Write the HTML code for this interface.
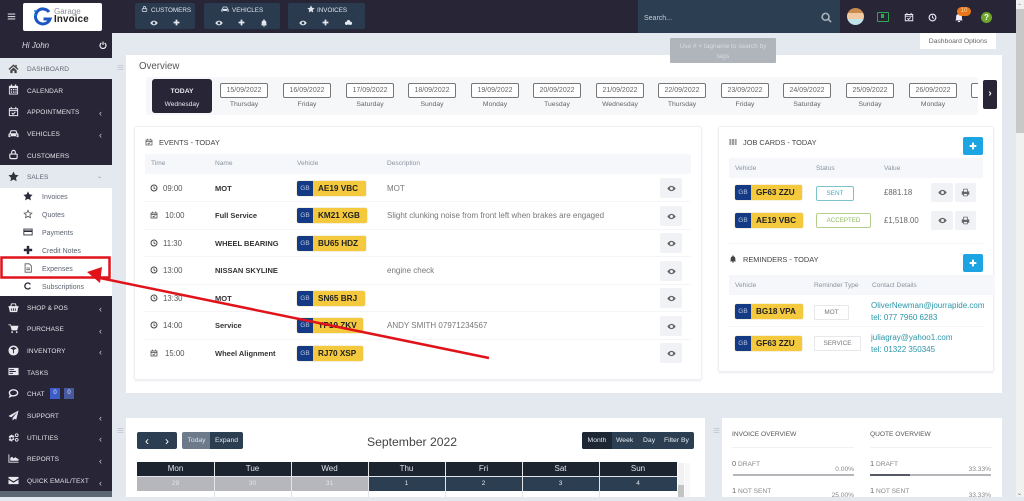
<!DOCTYPE html>
<html><head><meta charset="utf-8"><title>Garage Invoice Dashboard</title>
<style>
html,body{margin:0;padding:0}
body{width:1024px;height:497px;overflow:hidden;position:relative;background:#e4e9f0;font-family:"Liberation Sans",sans-serif;color:#444;filter:blur(.25px)}
.b,.t,svg.i{position:absolute}
.t{white-space:nowrap;line-height:10px;height:10px;transform:translateY(1px)}
svg.i{fill:currentColor}
.nav{font-size:6.500px;color:#e4e4ea;left:27px;letter-spacing:.1px;transform:translateY(2px)}
.sub{font-size:7px;color:#5d6470;left:42px;transform:translateY(2px)}
.ni{color:#e8e8ee;left:8px;width:11px;height:11px}
.si{color:#2b2a3a;left:23px;width:10px;height:10px}
.ar{font-size:9px;color:#c9c9d2;left:99px;transform:translateY(2px)}
.dt{position:absolute;top:83px;width:46px;height:13px;border:1px solid #777;border-radius:2px;font-size:7px;line-height:13px;text-align:center;color:#666;background:#fff}
.dy{position:absolute;top:100px;width:48px;line-height:10px;font-size:6.800px;text-align:center;color:#666}
.th{font-size:6.600px;color:#8a94a0}
.tm{font-size:7.800px;color:#555}
.nm{font-size:7.500px;font-weight:bold;color:#333;left:215px}
.ds{font-size:8px;color:#777;left:387px}
.p{position:absolute;height:15px;border-radius:2px;background:#f4c93d;overflow:hidden;border:0;box-shadow:0 0 1px #b89a30}
.p i{position:absolute;left:0;top:0;width:16px;height:15px;background:#143a86;color:#b9c6df;font:normal 6.500px/15px "Liberation Sans",sans-serif;text-align:center}
.p b{position:absolute;left:21px;top:0;font-size:8.200px;line-height:15px;color:#222;white-space:nowrap}
.eb{position:absolute;background:#f0f2f5;border-radius:2px;color:#666}
.eb svg{position:absolute;left:50%;top:50%;width:9px;height:9px;margin:-4.500px 0 0 -4.500px;fill:currentColor}
.cal{font-size:7.600px;color:#dfe5ec;text-align:center;position:absolute;line-height:14px}
.ct{font-size:8px;color:#2a96a8}
.ov{font-size:6.600px;color:#666}
</style></head><body>
<svg width="0" height="0" style="position:absolute"><defs>
<symbol id="eye" viewBox="0 0 24 24"><path d="M12 5C7 5 3 8.500 1 12c2 3.500 6 7 11 7s9-3.500 11-7c-2-3.500-6-7-11-7zm0 11a4 4 0 1 1 0-8 4 4 0 0 1 0 8z"/></symbol>
<symbol id="plus" viewBox="0 0 24 24"><path d="M9 2h6v7h7v6h-7v7H9v-7H2V9h7z"/></symbol>
<symbol id="bell" viewBox="0 0 24 24"><path d="M12 1a2 2 0 0 0-2 2v1a7 7 0 0 0-5 7v5l-2 3h18l-2-3v-5a7 7 0 0 0-5-7V3a2 2 0 0 0-2-2zM9 20a3 3 0 0 0 6 0z"/></symbol>
<symbol id="star" viewBox="0 0 24 24"><path d="M12 1l3.400 7.200 7.600 1-5.600 5.400 1.400 7.800L12 18.600 5.200 22.400l1.400-7.800L1 9.200l7.600-1z"/></symbol>
<symbol id="staro" viewBox="0 0 24 24"><path fill="none" stroke="currentColor" stroke-width="2" d="M12 3l2.800 6 6.400.9-4.700 4.400 1.200 6.500L12 17.600l-5.700 3.200 1.200-6.500L2.800 9.900l6.400-.9z"/></symbol>
<symbol id="clock" viewBox="0 0 24 24"><circle cx="12" cy="12" r="9" fill="none" stroke="currentColor" stroke-width="3"/><path fill="none" stroke="currentColor" stroke-width="2.500" d="M12 7v5.500l4 2"/></symbol>
<symbol id="cal" viewBox="0 0 24 24"><path fill="none" stroke="currentColor" stroke-width="2.200" d="M3 6h18v15H3zM3 10h18M7 2v5M17 2v5M8 15l3 3 5-5"/></symbol>
<symbol id="calf" viewBox="0 0 24 24"><path d="M6 1h3v3h6V1h3v3h4v19H2V4h4zM4 9v12h16V9z"/><path d="M6 11h3v3H6zM11 11h3v3h-3zM16 11h3v3h-3zM6 16h3v3H6zM11 16h3v3h-3zM16 16h3v3h-3z"/></symbol>
<symbol id="home" viewBox="0 0 24 24"><path d="M12 3L1 13l2 2 9-8 9 8 2-2-4-3.600V4h-3v2.800zM5 16v6h5v-5h4v5h5v-6l-7-6.300z"/></symbol>
<symbol id="car" viewBox="0 0 24 24"><path d="M6 5h12l3 7 2 1v7h-4v-2H5v2H1v-7l2-1zm1.500 2L6 11.500h12L16.500 7zM5 14a1.500 1.500 0 1 0 0 3 1.500 1.500 0 0 0 0-3zm14 0a1.500 1.500 0 1 0 0 3 1.500 1.500 0 0 0 0-3z"/></symbol>
<symbol id="user" viewBox="0 0 24 24"><path fill="none" stroke="currentColor" stroke-width="2.500" d="M8 11V7a4 4 0 0 1 8 0v4M5 11h14a1 1 0 0 1 1 1v6a3 3 0 0 1-3 3H7a3 3 0 0 1-3-3v-6a1 1 0 0 1 1-1z"/></symbol>
<symbol id="shop" viewBox="0 0 24 24"><path d="M7 3h10l2 6h4v3h-1l-2 10H4L2 12H1V9h4zm1.500 2L7.500 9h9l-1-4zM7 14v5h2v-5zm4 0v5h2v-5zm4 0v5h2v-5z"/></symbol>
<symbol id="cart" viewBox="0 0 24 24"><path d="M1 3h5l1 3h16l-3 10H8L5 5H1zM9 18a2 2 0 1 1 0 4 2 2 0 0 1 0-4zm10 0a2 2 0 1 1 0 4 2 2 0 0 1 0-4z"/></symbol>
<symbol id="cube" viewBox="0 0 24 24"><path d="M12 1a11 11 0 1 1 0 22 11 11 0 0 1 0-22zM5 7l6 3.500V18l2 0v-7.500L19 7l-7-3z"/></symbol>
<symbol id="tasks" viewBox="0 0 24 24"><path d="M1 4h22v16H1zm2 3v2h10V7zm0 4v2h14v-2zm0 4v2h8v-2z"/></symbol>
<symbol id="chat" viewBox="0 0 24 24"><path fill="none" stroke="currentColor" stroke-width="3" d="M12 4c5 0 9 2.600 9 6.500S17 17 12 17c-1 0-2 0-3-.3L4 19l1.500-4C4 13.800 3 12.300 3 10.500 3 6.600 7 4 12 4z"/></symbol>
<symbol id="send" viewBox="0 0 24 24"><path d="M23 1L1 13l6 3L20 5 10 17.500V23l4-4 4 2z"/></symbol>
<symbol id="cogs" viewBox="0 0 24 24"><path fill-rule="evenodd" d="M9 6l1.500 2 2.500-.5 1 2.500-2 1.500v2l2 1.500-1 2.500-2.500-.5L9 20.500H6.500L5 18.500l-2.500.5-1-2.500 2-1.500v-2l-2-1.500 1-2.500L5 8l1.500-2zM8 11a2.500 2.500 0 1 0 0 5 2.500 2.500 0 0 0 0-5z"/><circle cx="19" cy="7" r="3" fill="none" stroke="currentColor" stroke-width="2"/><circle cx="19" cy="17" r="3" fill="none" stroke="currentColor" stroke-width="2"/></symbol>
<symbol id="chart" viewBox="0 0 24 24"><path d="M1 3h2v16h20v2H1zM5 17v-6l4-3 3 4 4-3 4 3 3 1v4z"/></symbol>
<symbol id="mail" viewBox="0 0 24 24"><path d="M1 4h22v3l-11 7L1 7zM1 10l11 7 11-7v10H1z"/></symbol>
<symbol id="card" viewBox="0 0 24 24"><path d="M1 4h22v16H1zm2 2v2h18V6zm0 6v6h18v-6z"/></symbol>
<symbol id="doc" viewBox="0 0 24 24"><path fill="none" stroke="currentColor" stroke-width="2" d="M5 2h10l5 5v15H5zM8 12h9M8 16h9"/></symbol>
<symbol id="redo" viewBox="0 0 24 24"><path fill="none" stroke="currentColor" stroke-width="4" d="M19 7A9 9 0 1 0 19 17"/></symbol>
<symbol id="print" viewBox="0 0 24 24"><path d="M6 2h12v7h4v9h-4v4H6v-4H2V9h4zm2 2v6h8V4zm0 12v4h8v-4z"/></symbol>
<symbol id="rows" viewBox="0 0 24 24"><path d="M1 4h6v4H1zM9 4h6v4H9zM17 4h6v4h-6zM1 10h6v4H1zM9 10h6v4H9zM17 10h6v4h-6zM1 16h6v4H1zM9 16h6v4H9zM17 16h6v4h-6z"/></symbol>
<symbol id="search" viewBox="0 0 24 24"><path fill="none" stroke="currentColor" stroke-width="3.500" d="M10 3a7.500 7.500 0 1 1 0 15 7.500 7.500 0 0 1 0-15zM15.500 15.500L22 22"/></symbol>
<symbol id="power" viewBox="0 0 24 24"><path fill="none" stroke="currentColor" stroke-width="3.500" d="M7 6a9 9 0 1 0 10 0M12 2v10"/></symbol>
<symbol id="cars" viewBox="0 0 24 24"><path d="M12 3a5 5 0 0 1 5 5 5 5 0 1 1-2 9H9a5 5 0 1 1-2-9 5 5 0 0 1 5-5z"/></symbol>
<symbol id="ham" viewBox="0 0 24 24"><path d="M2 4h20v3H2zM2 10.500h20v3H2zM2 17h20v3H2z"/></symbol>
</defs></svg>

<!-- top bar -->
<div class="b" style="left:0;top:0;width:1016px;height:33px;background:#272536"></div>
<svg class="i" style="left:7px;top:12px;width:9px;height:9px;color:#cfd3da"><use href="#ham"/></svg>
<div class="b" style="left:23px;top:3px;width:79px;height:28px;background:#fff;border-radius:2px"></div>
<svg class="b" style="left:34px;top:7px;width:18px;height:20px" viewBox="0 0 18 20"><path d="M15 5A7.500 7.500 0 1 0 16 12H9.500" fill="none" stroke="#1c55c4" stroke-width="3"/><circle cx="1" cy="4" r="1" fill="#1c9ad6"/><circle cx="0.800" cy="8" r="1" fill="#1c9ad6"/></svg>
<div class="t" style="left:54px;top:6px;font-size:8px;color:#8a8f98">Garage</div>
<div class="t" style="left:54px;top:14px;font-size:9.700px;font-weight:bold;color:#222;letter-spacing:.2px">Invoice</div>

<div class="b" style="left:135px;top:3px;width:60px;height:26px;background:#2a3a4f;border-radius:2px"></div>
<div class="b" style="left:204px;top:3px;width:76px;height:26px;background:#2a3a4f;border-radius:2px"></div>
<div class="b" style="left:288px;top:3px;width:77px;height:26px;background:#2a3a4f;border-radius:2px"></div>
<svg class="i" style="left:141px;top:5px;width:7px;height:8px;color:#dfe3ea"><use href="#user"/></svg>
<div class="t" style="left:151px;top:5px;font-size:6.300px;color:#dfe3ea">CUSTOMERS</div>
<svg class="i" style="left:221px;top:5px;width:8px;height:8px;color:#dfe3ea"><use href="#car"/></svg>
<div class="t" style="left:232px;top:5px;font-size:6.300px;color:#dfe3ea">VEHICLES</div>
<svg class="i" style="left:307px;top:5px;width:8px;height:8px;color:#dfe3ea"><use href="#star"/></svg>
<div class="t" style="left:317px;top:5px;font-size:6.300px;color:#dfe3ea">INVOICES</div>
<svg class="i" style="left:150px;top:19px;width:8px;height:8px;color:#e4e8ee"><use href="#eye"/></svg>
<svg class="i" style="left:173px;top:19px;width:7px;height:7px;color:#e4e8ee"><use href="#plus"/></svg>
<svg class="i" style="left:215px;top:19px;width:8px;height:8px;color:#e4e8ee"><use href="#eye"/></svg>
<svg class="i" style="left:238px;top:19px;width:7px;height:7px;color:#e4e8ee"><use href="#plus"/></svg>
<svg class="i" style="left:260px;top:19px;width:8px;height:8px;color:#e4e8ee"><use href="#bell"/></svg>
<svg class="i" style="left:299px;top:19px;width:8px;height:8px;color:#e4e8ee"><use href="#eye"/></svg>
<svg class="i" style="left:322px;top:19px;width:7px;height:7px;color:#e4e8ee"><use href="#plus"/></svg>
<svg class="i" style="left:344px;top:19px;width:9px;height:8px;color:#e4e8ee"><use href="#cars"/></svg>

<div class="b" style="left:638px;top:0;width:202px;height:33px;background:#2c3e52"></div>
<div class="t" style="left:644px;top:13px;font-size:7px;color:#c3ccd6">Search...</div>
<svg class="i" style="left:821px;top:12px;width:11px;height:11px;color:#a9b3bd"><use href="#search"/></svg>
<div class="b" style="left:847px;top:8px;width:17px;height:17px;border-radius:50%;background:linear-gradient(#c98a50 0 30%,#f2c9a0 30% 65%,#bfe3e8 65%)"></div>
<div class="b" style="left:877px;top:12px;width:12px;height:10px;border:1.500px solid #2fa84f;box-sizing:border-box;border-radius:1px"></div>
<div class="b" style="left:881px;top:14px;width:3px;height:4px;background:#2fa84f"></div>
<svg class="i" style="left:904px;top:12px;width:10px;height:10px;color:#eef"><use href="#cal"/></svg>
<svg class="i" style="left:928px;top:13px;width:9px;height:9px;color:#eef"><use href="#clock"/></svg>
<svg class="i" style="left:954px;top:12px;width:10px;height:11px;color:#eef"><use href="#bell"/></svg>
<div class="b" style="left:957px;top:7px;width:14px;height:9px;border-radius:5px;background:#e8771a;color:#f6d9a0;font-size:6px;line-height:9px;text-align:center">10</div>
<div class="b" style="left:981px;top:12px;width:11px;height:11px;border-radius:50%;background:#6fa52a;color:#fff;font-size:8px;font-weight:bold;line-height:11px;text-align:center">?</div>

<!-- sidebar -->
<div class="b" style="left:0;top:33px;width:112px;height:464px;background:#272536"></div>
<div class="t" style="left:22px;top:40px;font-size:8px;font-style:italic;color:#dcdce4">Hi John</div>
<svg class="i" style="left:99px;top:41px;width:8px;height:8px;color:#f0f0f4"><use href="#power"/></svg>
<div class="b" style="left:0;top:58px;width:112px;height:21px;background:#e4e9f0"></div>
<div class="b" style="left:0;top:165px;width:112px;height:23px;background:#e4e9f0"></div>
<div class="b" style="left:0;top:188px;width:112px;height:108px;background:#fff"></div>
<div class="b" style="left:0;top:491px;width:112px;height:6px;background:#5b6873"></div>

<svg class="i ni" style="top:63px;color:#444"><use href="#home"/></svg><div class="t nav" style="top:63px;color:#5d6470">DASHBOARD</div>
<svg class="i ni" style="top:84px"><use href="#calf"/></svg><div class="t nav" style="top:85px">CALENDAR</div><svg class="i ni" style="top:106px"><use href="#cal"/></svg>
<div class="t nav" style="top:106px">APPOINTMENTS</div><div class="t ar" style="top:106px">‹</div>
<svg class="i ni" style="top:128px"><use href="#car"/></svg><div class="t nav" style="top:128px">VEHICLES</div><div class="t ar" style="top:128px">‹</div>
<svg class="i ni" style="top:149px"><use href="#user"/></svg><div class="t nav" style="top:150px">CUSTOMERS</div>
<svg class="i ni" style="top:171px;color:#33323f"><use href="#star"/></svg><div class="t nav" style="top:171px;color:#5d6470">SALES</div><div class="t" style="left:97px;top:171px;font-size:6px;color:#8b929c">⌄</div>

<svg class="i si" style="top:191px"><use href="#star"/></svg><div class="t sub" style="top:191px">Invoices</div>
<svg class="i si" style="top:209px;color:#555"><use href="#staro"/></svg><div class="t sub" style="top:209px">Quotes</div>
<svg class="i si" style="top:227px"><use href="#card"/></svg><div class="t sub" style="top:227px">Payments</div>
<svg class="i si" style="top:245px"><use href="#plus"/></svg><div class="t sub" style="top:245px">Credit Notes</div>
<svg class="i si" style="top:263px;color:#555"><use href="#doc"/></svg><div class="t sub" style="top:263px">Expenses</div>
<svg class="i si" style="top:281px;left:24px;width:8px"><use href="#redo"/></svg><div class="t sub" style="top:281px">Subscriptions</div>

<svg class="i ni" style="top:302px"><use href="#shop"/></svg><div class="t nav" style="top:302px">SHOP &amp; POS</div><div class="t ar" style="top:302px">‹</div>
<svg class="i ni" style="top:323px"><use href="#cart"/></svg><div class="t nav" style="top:323px">PURCHASE</div><div class="t ar" style="top:324px">‹</div>
<svg class="i ni" style="top:345px"><use href="#cube"/></svg><div class="t nav" style="top:345px">INVENTORY</div><div class="t ar" style="top:345px">‹</div>
<svg class="i ni" style="top:366px"><use href="#tasks"/></svg><div class="t nav" style="top:367px">TASKS</div>
<svg class="i ni" style="top:388px"><use href="#chat"/></svg><div class="t nav" style="top:388px">CHAT</div>
<div class="b" style="left:50px;top:388px;width:10px;height:11px;background:#3c5cc8;color:#dfe6ff;font-size:6px;line-height:11px;text-align:center">0</div>
<div class="b" style="left:64px;top:388px;width:10px;height:11px;background:#475aa0;color:#dfe6ff;font-size:6px;line-height:11px;text-align:center">0</div>
<svg class="i ni" style="top:410px"><use href="#send"/></svg><div class="t nav" style="top:410px">SUPPORT</div><div class="t ar" style="top:411px">‹</div>
<svg class="i ni" style="top:432px"><use href="#cogs"/></svg><div class="t nav" style="top:432px">UTILITIES</div><div class="t ar" style="top:432px">‹</div>
<svg class="i ni" style="top:453px"><use href="#chart"/></svg><div class="t nav" style="top:453px">REPORTS</div><div class="t ar" style="top:454px">‹</div>
<svg class="i ni" style="top:475px"><use href="#mail"/></svg><div class="t nav" style="top:475px">QUICK EMAIL/TEXT</div><div class="t ar" style="top:476px">‹</div>

<!-- grips -->
<svg class="i" style="left:117px;top:64px;width:7px;height:7px;color:#c3c8d0"><use href="#ham"/></svg>
<svg class="i" style="left:117px;top:427px;width:7px;height:7px;color:#c3c8d0"><use href="#ham"/></svg>
<svg class="i" style="left:713px;top:427px;width:7px;height:7px;color:#c3c8d0"><use href="#ham"/></svg>

<!-- overview panel -->
<div class="b" style="left:126px;top:55px;width:876px;height:338px;background:#fff"></div>
<div class="t" style="left:139px;top:61px;font-size:9.700px;color:#555">Overview</div>
<div class="b" style="left:146px;top:77px;width:832px;height:38px;background:#f6f7f9;border-radius:3px;overflow:hidden"></div>
<div class="b" style="left:152px;top:79px;width:60px;height:34px;background:#272536;border-radius:3px"></div>
<div class="t" style="left:152px;width:60px;text-align:center;top:86px;font-size:6.800px;font-weight:bold;color:#e8e8ee">TODAY</div>
<div class="t" style="left:152px;width:60px;text-align:center;top:99px;font-size:6.600px;color:#e8e8ee">Wednesday</div>

<div class="dt" style="left:220px">15/09/2022</div><div class="dy" style="left:220px">Thursday</div>
<div class="dt" style="left:283px">16/09/2022</div><div class="dy" style="left:283px">Friday</div>
<div class="dt" style="left:346px">17/09/2022</div><div class="dy" style="left:346px">Saturday</div>
<div class="dt" style="left:408px">18/09/2022</div><div class="dy" style="left:408px">Sunday</div>
<div class="dt" style="left:471px">19/09/2022</div><div class="dy" style="left:471px">Monday</div>
<div class="dt" style="left:533px">20/09/2022</div><div class="dy" style="left:533px">Tuesday</div>
<div class="dt" style="left:596px">21/09/2022</div><div class="dy" style="left:596px">Wednesday</div>
<div class="dt" style="left:658px">22/09/2022</div><div class="dy" style="left:658px">Thursday</div>
<div class="dt" style="left:721px">23/09/2022</div><div class="dy" style="left:721px">Friday</div>
<div class="dt" style="left:783px">24/09/2022</div><div class="dy" style="left:783px">Saturday</div>
<div class="dt" style="left:846px">25/09/2022</div><div class="dy" style="left:846px">Sunday</div>
<div class="dt" style="left:909px">26/09/2022</div><div class="dy" style="left:909px">Monday</div>
<div class="b" style="left:971px;top:83px;width:6px;height:13px;border:1px solid #777;border-right:0;border-radius:2px 0 0 2px;background:#fff"></div>
<div class="b" style="left:983px;top:80px;width:14px;height:29px;background:#272536;border-radius:2px;color:#fff;font-size:10px;line-height:27px;text-align:center;font-weight:bold">›</div>

<!-- events -->
<div class="b" style="left:134px;top:126px;width:568px;height:254px;background:#fff;border:1px solid #eef0f3;box-sizing:border-box;border-radius:3px;box-shadow:0 1px 2px #e8ebef"></div>
<svg class="i" style="left:145px;top:138px;width:8px;height:8px;color:#555"><use href="#cal"/></svg>
<div class="t" style="left:159px;top:137px;font-size:7.400px;color:#444">EVENTS - TODAY</div>
<div class="b" style="left:145px;top:154px;width:546px;height:20px;background:#f5f7fa"></div>
<div class="t th" style="left:151px;top:158px">Time</div>
<div class="t th" style="left:215px;top:158px">Name</div>
<div class="t th" style="left:297px;top:158px">Vehicle</div>
<div class="t th" style="left:387px;top:158px">Description</div>
<div class="b" style="left:145px;top:201px;width:546px;height:1px;background:#f4f5f7"></div>
<div class="b" style="left:145px;top:229px;width:546px;height:1px;background:#f4f5f7"></div>
<div class="b" style="left:145px;top:256px;width:546px;height:1px;background:#f4f5f7"></div>
<div class="b" style="left:145px;top:284px;width:546px;height:1px;background:#f4f5f7"></div>
<div class="b" style="left:145px;top:311px;width:546px;height:1px;background:#f4f5f7"></div>
<div class="b" style="left:145px;top:339px;width:546px;height:1px;background:#f4f5f7"></div>

<svg class="i" style="left:150px;top:184px;width:8px;height:8px;color:#444"><use href="#clock"/></svg><div class="t tm" style="left:163px;top:183px">09:00</div><div class="t nm" style="top:183px">MOT</div><div class="t ds" style="top:183px">MOT</div>
<div class="p" style="left:297px;top:181px;width:69px"><i>GB</i><b>AE19 VBC</b></div><div class="eb" style="left:660px;top:178px;width:22px;height:20px"><svg><use href="#eye"/></svg></div>

<svg class="i" style="left:150px;top:211px;width:8px;height:8px;color:#444"><use href="#cal"/></svg><div class="t tm" style="left:165px;top:210px">10:00</div><div class="t nm" style="top:210px">Full Service</div><div class="t ds" style="top:210px">Slight clunking noise from front left when brakes are engaged</div>
<div class="p" style="left:297px;top:208px;width:70px"><i>GB</i><b>KM21 XGB</b></div><div class="eb" style="left:660px;top:206px;width:22px;height:20px"><svg><use href="#eye"/></svg></div>

<svg class="i" style="left:150px;top:239px;width:8px;height:8px;color:#444"><use href="#clock"/></svg><div class="t tm" style="left:163px;top:238px">11:30</div><div class="t nm" style="top:238px">WHEEL BEARING</div>
<div class="p" style="left:297px;top:236px;width:69px"><i>GB</i><b>BU65 HDZ</b></div><div class="eb" style="left:660px;top:233px;width:22px;height:20px"><svg><use href="#eye"/></svg></div>

<svg class="i" style="left:150px;top:266px;width:8px;height:8px;color:#444"><use href="#clock"/></svg><div class="t tm" style="left:163px;top:265px">13:00</div><div class="t nm" style="top:265px">NISSAN SKYLINE</div><div class="t ds" style="top:265px">engine check</div>
<div class="eb" style="left:660px;top:261px;width:22px;height:20px"><svg><use href="#eye"/></svg></div>

<svg class="i" style="left:150px;top:294px;width:8px;height:8px;color:#444"><use href="#clock"/></svg><div class="t tm" style="left:163px;top:293px">13:30</div><div class="t nm" style="top:293px">MOT</div>
<div class="p" style="left:297px;top:291px;width:68px"><i>GB</i><b>SN65 BRJ</b></div><div class="eb" style="left:660px;top:288px;width:22px;height:20px"><svg><use href="#eye"/></svg></div>

<svg class="i" style="left:150px;top:321px;width:8px;height:8px;color:#444"><use href="#clock"/></svg><div class="t tm" style="left:163px;top:320px">14:00</div><div class="t nm" style="top:320px">Service</div><div class="t ds" style="top:320px">ANDY SMITH 07971234567</div>
<div class="p" style="left:297px;top:318px;width:66px"><i>GB</i><b>YP19 ZKV</b></div><div class="eb" style="left:660px;top:316px;width:22px;height:20px"><svg><use href="#eye"/></svg></div>

<svg class="i" style="left:150px;top:349px;width:8px;height:8px;color:#444"><use href="#cal"/></svg><div class="t tm" style="left:165px;top:348px">15:00</div><div class="t nm" style="top:348px">Wheel Alignment</div>
<div class="p" style="left:297px;top:346px;width:66px"><i>GB</i><b>RJ70 XSP</b></div><div class="eb" style="left:660px;top:343px;width:22px;height:20px"><svg><use href="#eye"/></svg></div>

<!-- right panel -->
<div class="b" style="left:718px;top:126px;width:276px;height:246px;background:#fff;border:1px solid #eef0f3;box-sizing:border-box;border-radius:3px;box-shadow:0 1px 2px #e8ebef"></div>
<svg class="i" style="left:729px;top:138px;width:8px;height:8px;color:#666"><use href="#rows"/></svg>
<div class="t" style="left:743px;top:137px;font-size:7.400px;color:#444">JOB CARDS - TODAY</div>
<div class="b" style="left:963px;top:137px;width:20px;height:18px;background:#1ca5e2;border-radius:2px"></div>
<svg class="i" style="left:969px;top:142px;width:8px;height:8px;color:#fff"><use href="#plus"/></svg>
<div class="b" style="left:729px;top:158px;width:254px;height:20px;background:#f5f7fa"></div>
<div class="t th" style="left:735px;top:163px">Vehicle</div>
<div class="t th" style="left:816px;top:163px">Status</div>
<div class="t th" style="left:884px;top:163px">Value</div>
<div class="p" style="left:735px;top:185px;width:67px"><i>GB</i><b>GF63 ZZU</b></div>
<div class="b" style="left:816px;top:186px;width:38px;height:15px;border:1px solid #7cc3cf;box-sizing:border-box;border-radius:2px;color:#4aa8b8;font-size:6.400px;line-height:13px;text-align:center">SENT</div>
<div class="t" style="left:884px;top:187px;font-size:7.800px;color:#666">£881.18</div>
<div class="eb" style="left:931px;top:183px;width:22px;height:19px"><svg><use href="#eye"/></svg></div>
<div class="eb" style="left:955px;top:183px;width:21px;height:19px"><svg><use href="#print"/></svg></div>
<div class="p" style="left:735px;top:213px;width:68px"><i>GB</i><b>AE19 VBC</b></div>
<div class="b" style="left:816px;top:213px;width:55px;height:15px;border:1px solid #b5cf8f;box-sizing:border-box;border-radius:2px;color:#8dbb5e;font-size:6.200px;line-height:13px;text-align:center">ACCEPTED</div>
<div class="t" style="left:884px;top:215px;font-size:7.800px;color:#666">£1,518.00</div>
<div class="eb" style="left:931px;top:211px;width:22px;height:19px"><svg><use href="#eye"/></svg></div>
<div class="eb" style="left:955px;top:211px;width:21px;height:19px"><svg><use href="#print"/></svg></div>
<div class="b" style="left:729px;top:243px;width:254px;height:1px;background:#f4f5f7"></div>

<svg class="i" style="left:729px;top:255px;width:8px;height:8px;color:#444"><use href="#bell"/></svg>
<div class="t" style="left:743px;top:254px;font-size:7.400px;color:#444">REMINDERS - TODAY</div>
<div class="b" style="left:963px;top:254px;width:20px;height:18px;background:#1ca5e2;border-radius:2px"></div>
<svg class="i" style="left:969px;top:259px;width:8px;height:8px;color:#fff"><use href="#plus"/></svg>
<div class="b" style="left:729px;top:275px;width:265px;height:20px;background:#f5f7fa"></div>
<div class="t th" style="left:735px;top:280px">Vehicle</div>
<div class="t th" style="left:814px;top:280px">Reminder Type</div>
<div class="t th" style="left:872px;top:280px">Contact Details</div>
<div class="p" style="left:735px;top:304px;width:68px"><i>GB</i><b>BG18 VPA</b></div>
<div class="b" style="left:814px;top:305px;width:35px;height:15px;border:1px solid #e6e8ec;box-sizing:border-box;border-radius:1px;color:#777;font-size:6.400px;line-height:13px;text-align:center">MOT</div>
<div class="t ct" style="left:871px;top:300px">OliverNewman@jourrapide.com</div>
<div class="t ct" style="left:871px;top:312px">tel: 077 7960 6283</div>
<div class="b" style="left:729px;top:326px;width:254px;height:1px;background:#f4f5f7"></div>
<div class="p" style="left:735px;top:336px;width:67px"><i>GB</i><b>GF63 ZZU</b></div>
<div class="b" style="left:814px;top:336px;width:47px;height:15px;border:1px solid #e6e8ec;box-sizing:border-box;border-radius:1px;color:#777;font-size:6.400px;line-height:13px;text-align:center">SERVICE</div>
<div class="t ct" style="left:871px;top:332px">juliagray@yahoo1.com</div>
<div class="t ct" style="left:871px;top:344px">tel: 01322 350345</div>

<!-- calendar panel -->
<div class="b" style="left:126px;top:418px;width:579px;height:79px;background:#fff"></div>
<div class="b" style="left:137px;top:432px;width:40px;height:17px;background:#2c3e52;border-radius:2px"></div>
<div class="t" style="left:145px;top:435px;font-size:12px;color:#fff">‹</div>
<div class="t" style="left:165px;top:435px;font-size:12px;color:#fff">›</div>
<div class="b" style="left:182px;top:432px;width:29px;height:17px;background:#6d7a8a;border-radius:2px 0 0 2px;color:#dfe4ea;font-size:6.800px;line-height:17px;text-align:center">Today</div>
<div class="b" style="left:210px;top:432px;width:33px;height:17px;background:#2c3e52;border-radius:0 2px 2px 0;color:#e6ebf0;font-size:6.800px;line-height:17px;text-align:center">Expand</div>
<div class="t" style="left:337px;width:150px;text-align:center;top:436px;font-size:12.200px;color:#444">September 2022</div>
<div class="b" style="left:582px;top:432px;width:112px;height:17px;background:#2c3e52;border-radius:2px"></div>
<div class="b" style="left:582px;top:432px;width:30px;height:17px;background:#1c2733;border-radius:2px 0 0 2px;color:#dfe4ea;font-size:6.800px;line-height:17px;text-align:center">Month</div>
<div class="t" style="left:616px;top:435px;font-size:6.800px;color:#e6ebf0">Week</div>
<div class="t" style="left:643px;top:435px;font-size:6.800px;color:#e6ebf0">Day</div>
<div class="t" style="left:664px;top:435px;font-size:6.800px;color:#e6ebf0">Filter By</div>

<div class="b" style="left:137px;top:462px;width:540px;height:14px;background:#1c2430"></div>
<div class="b" style="left:137px;top:477px;width:231px;height:14px;background:#b5b7bc"></div>
<div class="b" style="left:368px;top:477px;width:309px;height:14px;background:#2c3e52"></div>
<div class="cal" style="left:137px;top:462px;width:77px;font-size:8px">Mon</div>
<div class="cal" style="left:214px;top:462px;width:77px;font-size:8px">Tue</div>
<div class="cal" style="left:291px;top:462px;width:77px;font-size:8px">Wed</div>
<div class="cal" style="left:368px;top:462px;width:77px;font-size:8px">Thu</div>
<div class="cal" style="left:445px;top:462px;width:77px;font-size:8px">Fri</div>
<div class="cal" style="left:522px;top:462px;width:77px;font-size:8px">Sat</div>
<div class="cal" style="left:599px;top:462px;width:78px;font-size:8px">Sun</div>
<div class="cal" style="left:137px;top:477px;width:77px;font-size:6.500px;color:#e4e5e8">29</div>
<div class="cal" style="left:214px;top:477px;width:77px;font-size:6.500px;color:#e4e5e8">30</div>
<div class="cal" style="left:291px;top:477px;width:77px;font-size:6.500px;color:#e4e5e8">31</div>
<div class="cal" style="left:368px;top:477px;width:77px;font-size:6.500px">1</div>
<div class="cal" style="left:445px;top:477px;width:77px;font-size:6.500px">2</div>
<div class="cal" style="left:522px;top:477px;width:77px;font-size:6.500px">3</div>
<div class="cal" style="left:599px;top:477px;width:78px;font-size:6.500px">4</div>
<div class="b" style="left:214px;top:462px;width:1px;height:35px;background:#e3e5e9"></div>
<div class="b" style="left:291px;top:462px;width:1px;height:35px;background:#e3e5e9"></div>
<div class="b" style="left:368px;top:462px;width:1px;height:35px;background:#e3e5e9"></div>
<div class="b" style="left:445px;top:462px;width:1px;height:35px;background:#e3e5e9"></div>
<div class="b" style="left:522px;top:462px;width:1px;height:35px;background:#e3e5e9"></div>
<div class="b" style="left:599px;top:462px;width:1px;height:35px;background:#e3e5e9"></div>
<div class="b" style="left:137px;top:476px;width:540px;height:1px;background:#e3e5e9"></div>
<div class="b" style="left:678px;top:463px;width:6px;height:34px;background:#f1f1f1"></div>
<div class="b" style="left:678px;top:485px;width:6px;height:12px;background:#c4c4c4"></div>
<div class="b" style="left:685px;top:463px;width:5px;height:34px;background:#f8f8f8"></div>

<!-- overview stats -->
<div class="b" style="left:722px;top:418px;width:280px;height:79px;background:#fff"></div>
<div class="t ov" style="left:732px;top:429px;color:#555">INVOICE OVERVIEW</div>
<div class="t ov" style="left:870px;top:429px;color:#555">QUOTE OVERVIEW</div>
<div class="b" style="left:732px;top:447px;width:122px;height:1px;background:#f0f1f3"></div>
<div class="b" style="left:870px;top:447px;width:122px;height:1px;background:#f0f1f3"></div>
<div class="t ov" style="left:732px;top:458px"><span style="font-size:7.500px">0</span> <span style="color:#888">DRAFT</span></div>
<div class="t ov" style="left:870px;top:458px"><span style="font-size:7.500px">1</span> <span style="color:#888">DRAFT</span></div>
<div class="t ov" style="left:824px;width:30px;text-align:right;top:464px;color:#888">0.00%</div>
<div class="t ov" style="left:961px;width:30px;text-align:right;top:464px;color:#888">33.33%</div>
<div class="b" style="left:733px;top:474px;width:121px;height:2px;background:#b4b6ba"></div>
<div class="b" style="left:870px;top:474px;width:121px;height:2px;background:#b4b6ba"></div>
<div class="b" style="left:870px;top:474px;width:40px;height:2px;background:#555a64"></div>
<div class="t ov" style="left:732px;top:485px"><span style="font-size:7.500px">1</span> <span style="color:#888">NOT SENT</span></div>
<div class="t ov" style="left:870px;top:485px"><span style="font-size:7.500px">1</span> <span style="color:#888">NOT SENT</span></div>
<div class="t ov" style="left:824px;width:30px;text-align:right;top:490px;color:#888">25.00%</div>
<div class="t ov" style="left:961px;width:30px;text-align:right;top:490px;color:#888">33.33%</div>

<!-- page scrollbar -->
<div class="b" style="left:1016px;top:0;width:8px;height:497px;background:#f1f1f1"></div>
<div class="b" style="left:1016px;top:9px;width:8px;height:124px;background:#c8c8c8"></div>
<div class="t" style="left:1017px;top:1px;font-size:6px;color:#888">⌃</div>
<div class="t" style="left:1017px;top:488px;font-size:6px;color:#666">⌄</div>

<!-- tooltip + dashboard options -->
<div class="b" style="left:670px;top:38px;width:106px;height:25px;background:#b0b5bb;border-radius:1px;color:#d8dbe0;font-size:6.500px;line-height:10px;text-align:center;padding-top:4px;box-sizing:border-box">Use # + tagname to search by<br>tags</div>
<div class="b" style="left:920px;top:33px;width:76px;height:16px;background:#fff;color:#666;font-size:6.800px;line-height:17px;text-align:center">Dashboard Options</div>

<!-- annotation -->
<svg class="b" style="left:0;top:0;width:1024px;height:497px;pointer-events:none" viewBox="0 0 1024 497">
<rect x="1.500" y="257.500" width="108" height="20" fill="none" stroke="#e0121a" stroke-width="2.500"/>
<line x1="489" y1="358" x2="100" y2="278" stroke="#e0121a" stroke-width="2.500"/>
<polygon points="87,272 102,267 100,283" fill="#e0121a"/>
</svg>
</body></html>
